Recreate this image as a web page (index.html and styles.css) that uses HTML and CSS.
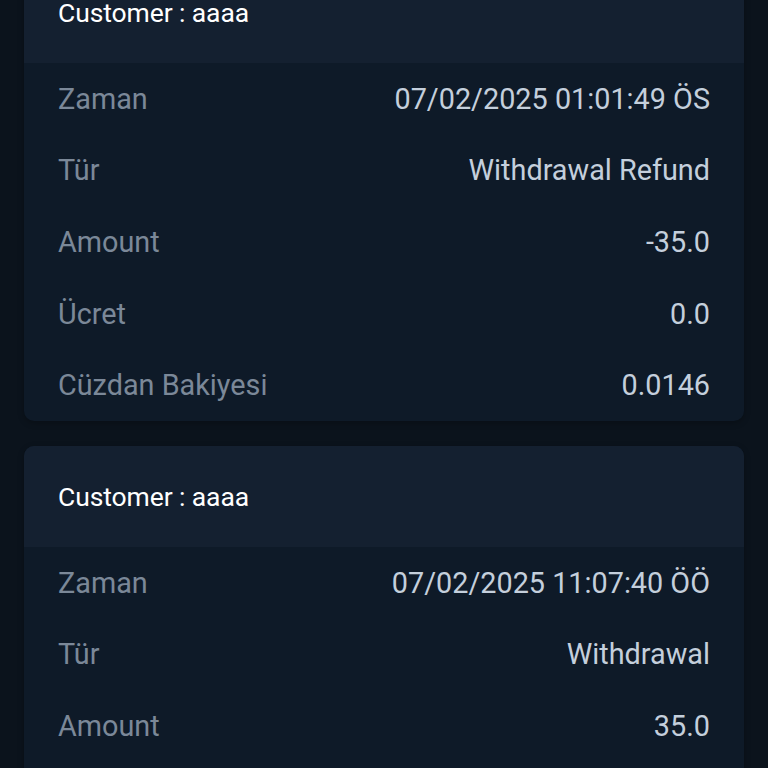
FILE: index.html
```html
<!DOCTYPE html>
<html lang="tr">
<head>
    <meta charset="UTF-8">
    <meta name="viewport" content="width=device-width, initial-scale=1.0">
    <title>İşlem Geçmişi</title>
    <link rel="stylesheet" href="styles.css">
</head>
<body>
    <main class="tx-list">
        <!-- 第一条记录 -->
        <section class="tx-card">
            <div class="tx-head">Customer : aaaa</div>
            <div class="tx-body">
                <div class="tx-row"><span class="tx-label">Zaman</span><span class="tx-value">07/02/2025 01:01:49 ÖS</span></div>
                <div class="tx-row"><span class="tx-label">Tür</span><span class="tx-value">Withdrawal Refund</span></div>
                <div class="tx-row"><span class="tx-label">Amount</span><span class="tx-value">-35.0</span></div>
                <div class="tx-row"><span class="tx-label">Ücret</span><span class="tx-value">0.0</span></div>
                <div class="tx-row"><span class="tx-label">Cüzdan Bakiyesi</span><span class="tx-value">0.0146</span></div>
            </div>
        </section>

        <!-- 第二条记录 -->
        <section class="tx-card">
            <div class="tx-head">Customer : aaaa</div>
            <div class="tx-body">
                <div class="tx-row"><span class="tx-label">Zaman</span><span class="tx-value">07/02/2025 11:07:40 ÖÖ</span></div>
                <div class="tx-row"><span class="tx-label">Tür</span><span class="tx-value">Withdrawal</span></div>
                <div class="tx-row"><span class="tx-label">Amount</span><span class="tx-value">35.0</span></div>
                <div class="tx-row"><span class="tx-label">Ücret</span><span class="tx-value">0.0</span></div>
                <div class="tx-row"><span class="tx-label">Cüzdan Bakiyesi</span><span class="tx-value">0.0146</span></div>
            </div>
        </section>
    </main>
</body>
</html>
```

FILE: styles.css
```css
/* 基础重置 */
* {
    margin: 0;
    padding: 0;
    box-sizing: border-box;
}

html, body {
    height: 100%;
    overflow: hidden;
}

body {
    background-color: #0b131c;
    font-family: Roboto, "Noto Sans", sans-serif;
}

/* 列表（已滚动） */
.tx-list {
    display: flex;
    flex-direction: column;
    gap: 25px;
    padding: 0 24px;
    margin-top: -38px;
}

/* 卡片 */
.tx-card {
    border-radius: 10px;
    overflow: hidden;
    background-color: #0e1a28;
    box-shadow: 0 2px 6px rgba(0,0,0,0.25);
}

.tx-head {
    height: 101px;
    display: flex;
    align-items: center;
    padding: 0 34px;
    background-color: #142030;
    color: #ffffff;
    font-size: 26.5px;
    letter-spacing: -0.1px;
}

.tx-body {
    display: flex;
    flex-direction: column;
}

.tx-row {
    height: 71.6px;
    display: flex;
    justify-content: space-between;
    align-items: center;
    padding: 0 34px;
    font-size: 28.8px;
}

.tx-label {
    color: #7b8898;
}

.tx-value {
    color: #c4cfdc;
}
```
